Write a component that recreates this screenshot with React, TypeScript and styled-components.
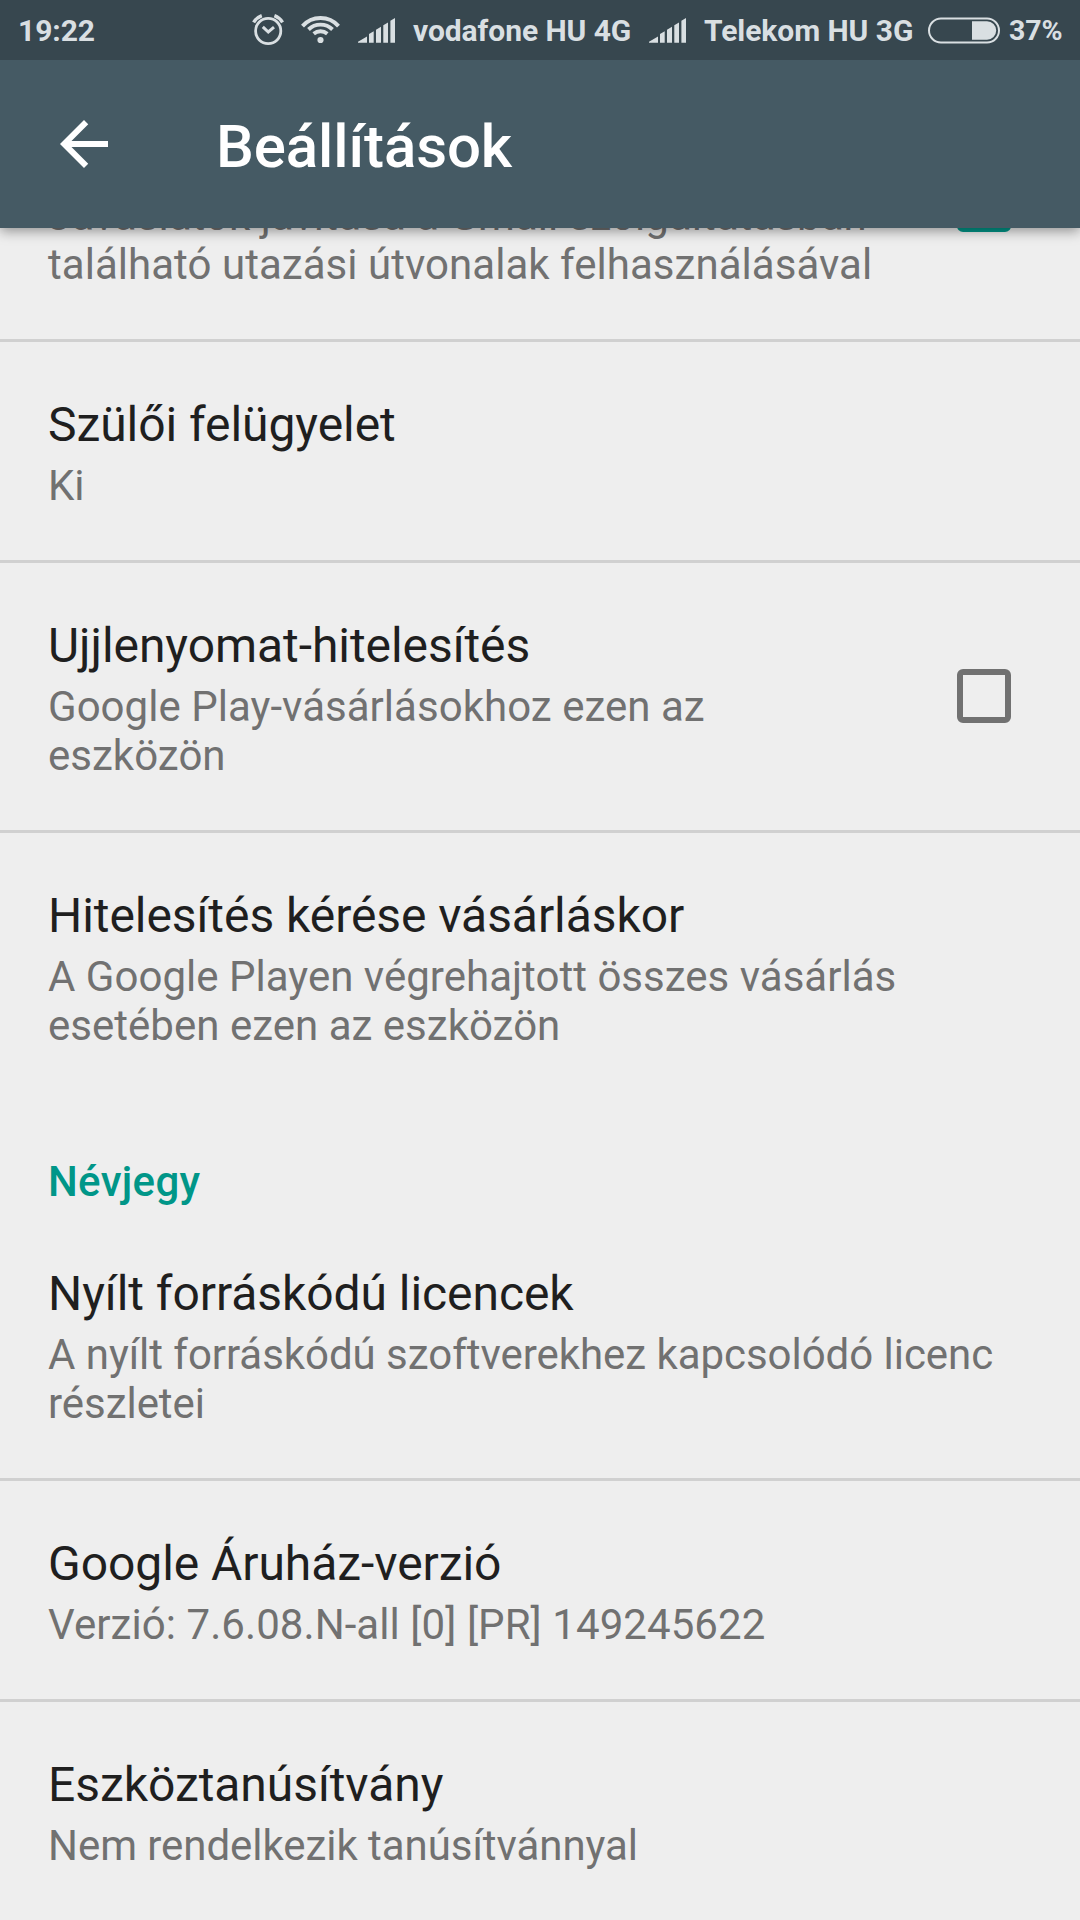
import React from "react";
import styled, { createGlobalStyle } from "styled-components";

const GlobalStyle = createGlobalStyle`
  * { box-sizing: border-box; }
  html, body { margin: 0; padding: 0; background: #eeeeee; overflow: hidden; }
`;

const Screen = styled.div`
  width: 1080px;
  height: 1920px;
  display: flex;
  flex-direction: column;
  overflow: hidden;
  background: #eeeeee;
  font-family: Roboto, "Noto Sans", sans-serif;
`;

const StatusBar = styled.header`
  flex: none;
  height: 60px;
  display: flex;
  align-items: center;
  padding: 0 18px;
  background: #37474f;
  color: #d9dfe2;
  font-size: 30px;
  font-weight: 700;
  line-height: 35px;
  white-space: nowrap;
  z-index: 2;
`;

const Label = styled.span<{ $width?: number; $gap?: number; $size?: number }>`
  flex: none;
  width: ${(p) => (p.$width ? `${p.$width}px` : "auto")};
  margin-left: ${(p) => p.$gap ?? 0}px;
  font-size: ${(p) => p.$size ?? 30}px;
  letter-spacing: -0.06px;
`;

const Glyph = styled.svg<{ $gap: number }>`
  display: block;
  flex: none;
  margin-left: ${(p) => p.$gap}px;
`;

const Toolbar = styled.div`
  flex: none;
  height: 168px;
  display: flex;
  align-items: center;
  padding-left: 48px;
  background: #455a64;
  box-shadow: 0 3px 12px rgba(0, 0, 0, 0.4);
  z-index: 1;
`;

const BackButton = styled.button`
  width: 72px;
  height: 72px;
  margin: 0 96px 0 0;
  padding: 0;
  border: 0;
  background: none;
`;

const ScreenTitle = styled.h1`
  margin: 6px 0 0;
  color: #ffffff;
  font-size: 60px;
  font-weight: 500;
  line-height: 70px;
  letter-spacing: -0.1px;
`;

const List = styled.main`
  flex: 1;
  min-height: 0;
  display: flex;
  flex-direction: column;
  overflow: hidden;
`;

const Item = styled.section<{ $divided?: boolean; $scrolled?: boolean }>`
  flex: none;
  display: flex;
  align-items: center;
  justify-content: space-between;
  padding: 0 48px;
  margin-top: ${(p) => (p.$scrolled ? "-156px" : "0")};
  border-bottom: ${(p) => (p.$divided ? "3px solid #d0d0d0" : "0")};
`;

const ItemText = styled.div`
  padding: 55px 0 50px;
`;

const ItemTitle = styled.h2`
  margin: 0 0 8px;
  color: #1f1f1f;
  font-size: 48px;
  font-weight: 400;
  line-height: 56px;
  letter-spacing: -0.06px;
`;

const Summary = styled.p<{ $tracking?: number }>`
  margin: 0;
  color: #717171;
  font-size: 42px;
  line-height: 49px;
  letter-spacing: ${(p) => p.$tracking ?? 0}px;
  white-space: pre-line;
`;

const SectionTitle = styled.h3`
  flex: none;
  height: 111px;
  margin: 0;
  padding: 57px 48px 0;
  color: #009688;
  font-size: 42px;
  font-weight: 500;
  line-height: 49px;
  letter-spacing: 0.3px;
`;

const CheckBox = styled.span<{ $checked?: boolean }>`
  flex: none;
  width: 54px;
  height: 54px;
  margin: 0 21px 1px 0;
  border: 6px solid ${(p) => (p.$checked ? "#009688" : "#717171")};
  border-radius: 6px;
  background: ${(p) => (p.$checked ? "#009688" : "transparent")};
`;

const AlarmIcon = () => (
  <Glyph $gap={0} width="32" height="32" viewBox="0 0 32 32" fill="none" stroke="#d9dfe2">
    <circle cx="16.2" cy="17" r="12.6" strokeWidth="2.8" />
    <path d="M10.800 12.800L16.300 18 22 13.200" strokeWidth="3" />
    <path d="M1.600 8.400Q4.500 3.600 9.800 1.600M30.600 8.400Q27.700 3.600 22.400 1.600" strokeWidth="3.4" />
  </Glyph>
);

const WifiIcon = () => (
  <Glyph $gap={17} width="39" height="30" viewBox="0.5 0 39 30" fill="none" stroke="#d9dfe2" strokeWidth="3.9">
    <path d="M2 11.100A24 24 0 0 1 38 11.100" />
    <path d="M8 14.500A17.300 17.300 0 0 1 32 14.500" />
    <path d="M13.200 18.700A10.700 10.700 0 0 1 26.800 18.700" />
    <circle cx="20" cy="25" r="3.1" fill="#d9dfe2" stroke="none" />
  </Glyph>
);

const SignalIcon = ({ gap }: { gap: number }) => (
  <Glyph $gap={gap} width="37" height="26" viewBox="0 0 37 26" fill="#d9dfe2">
    <path d="M0 25.700V24.700L9 19.500V25.700ZM11 25.700V17L15.700 14.200V25.700ZM18 25.700V12.700L23 9.700V25.700ZM25.300 25.700V8.300L30 5.500V25.700ZM32.400 25.700V3.800L37 1V25.700Z" />
  </Glyph>
);

const BatteryIcon = () => (
  <Glyph $gap={14} width="72" height="27" viewBox="0 0 72 27">
    <rect x="1" y="1.500" width="70" height="24" rx="12" fill="none" stroke="#d9dfe2" strokeWidth="2" />
    <path d="M44 4.300H59A9.200 9.200 0 0 1 59 22.700H44Z" fill="#d9dfe2" />
  </Glyph>
);

type Entry = { title: string; summary: string; divided?: boolean; checkbox?: boolean; tracking?: number };

const controls: Entry[] = [
  { title: "Szülői felügyelet", summary: "Ki", divided: true },
  {
    title: "Ujjlenyomat-hitelesítés",
    summary: "Google Play-vásárlásokhoz ezen az\neszközön",
    divided: true,
    checkbox: true,
    tracking: 0.03,
  },
  {
    title: "Hitelesítés kérése vásárláskor",
    summary: "A Google Playen végrehajtott összes vásárlás\nesetében ezen az eszközön",
    tracking: 0.02,
  },
];

const about: Entry[] = [
  {
    title: "Nyílt forráskódú licencek",
    summary: "A nyílt forráskódú szoftverekhez kapcsolódó licenc\nrészletei",
    divided: true,
    tracking: -0.04,
  },
  {
    title: "Google Áruház-verzió",
    summary: "Verzió: 7.6.08.N-all [0] [PR] 149245622",
    divided: true,
    tracking: 0.07,
  },
  { title: "Eszköztanúsítvány", summary: "Nem rendelkezik tanúsítvánnyal", tracking: -0.05 },
];

const Setting = ({ entry }: { entry: Entry }) => (
  <Item $divided={entry.divided}>
    <ItemText>
      <ItemTitle>{entry.title}</ItemTitle>
      <Summary $tracking={entry.tracking}>{entry.summary}</Summary>
    </ItemText>
    {entry.checkbox && <CheckBox />}
  </Item>
);

export default function App() {
  return (
    <>
      <GlobalStyle />
      <Screen>
        <StatusBar>
          <Label $width={234}>19:22</Label>
          <AlarmIcon />
          <WifiIcon />
          <SignalIcon gap={18} />
          <Label $width={220} $gap={18}>vodafone HU 4G</Label>
          <SignalIcon gap={16} />
          <Label $width={210} $gap={18}>Telekom HU 3G</Label>
          <BatteryIcon />
          <Label $gap={9} $size={28.5}>37%</Label>
        </StatusBar>
        <Toolbar>
          <BackButton aria-label="Vissza">
            <svg width="72" height="72" viewBox="0 0 24 24" fill="#ffffff">
              <path d="M20 11H7.830l5.590-5.590L12 4l-8 8 8 8 1.410-1.410L7.830 13H20v-2z" />
            </svg>
          </BackButton>
          <ScreenTitle>Beállítások</ScreenTitle>
        </Toolbar>
        <List>
          <Item $divided $scrolled>
            <ItemText>
              <ItemTitle>&nbsp;</ItemTitle>
              <Summary $tracking={0.04}>
                {"Javaslatok javítása a Gmail szolgáltatásban\ntalálható utazási útvonalak felhasználásával"}
              </Summary>
            </ItemText>
            <CheckBox $checked />
          </Item>
          {controls.map((entry) => (
            <Setting key={entry.title} entry={entry} />
          ))}
          <SectionTitle>Névjegy</SectionTitle>
          {about.map((entry) => (
            <Setting key={entry.title} entry={entry} />
          ))}
        </List>
      </Screen>
    </>
  );
}
